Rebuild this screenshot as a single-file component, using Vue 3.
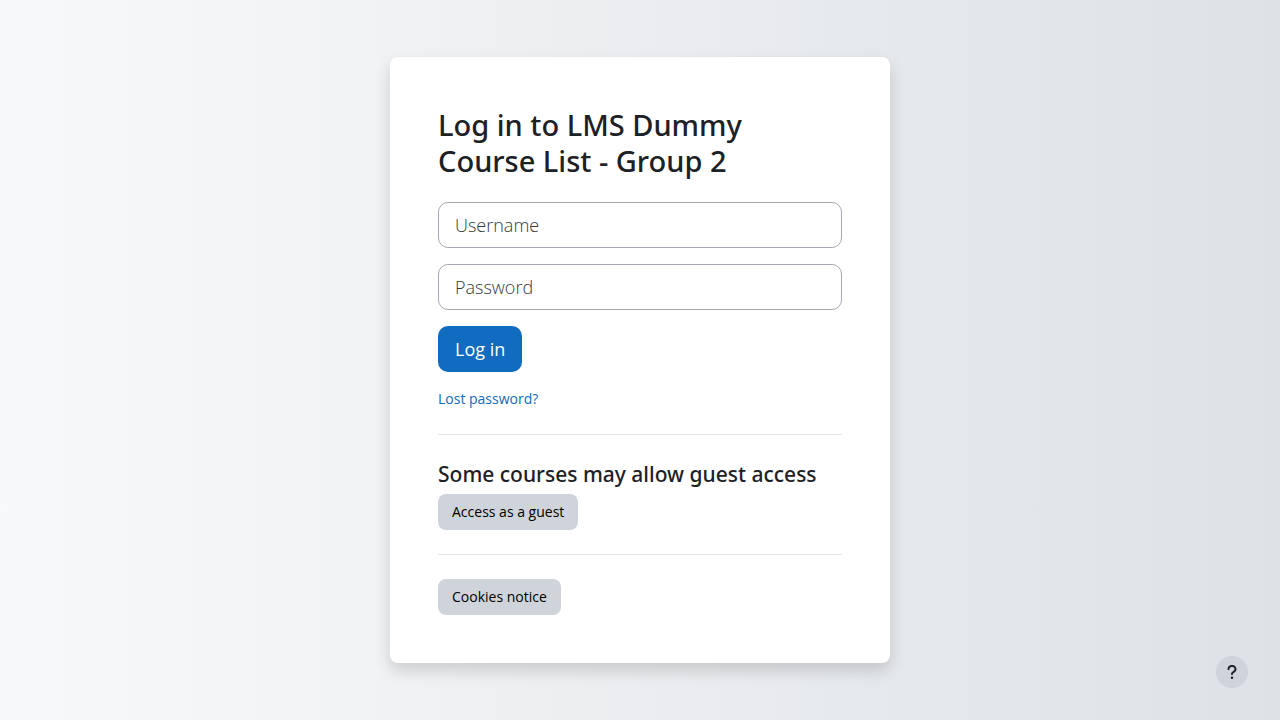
<script setup>
import { ref } from 'vue'

const username = ref('')
const password = ref('')
</script>

<template>
  <div class="page">
    <main class="card">
      <h1>Log in to LMS Dummy Course List - Group 2</h1>
      <form class="login" @submit.prevent>
        <input v-model="username" type="text" placeholder="Username" aria-label="Username" autocomplete="username" />
        <input v-model="password" type="password" placeholder="Password" aria-label="Password" autocomplete="current-password" />
        <button class="primary" type="submit">Log in</button>
      </form>
      <a class="lost" href="#">Lost password?</a>
      <hr />
      <h2>Some courses may allow guest access</h2>
      <button class="secondary" type="button">Access as a guest</button>
      <hr />
      <button class="secondary" type="button">Cookies notice</button>
    </main>
    <button class="help" type="button" aria-label="Help">
      <svg viewBox="0 0 320 512" aria-hidden="true">
        <path d="M80 160c0-35.300 28.700-64 64-64h32c35.300 0 64 28.700 64 64v3.600c0 21.800-11.100 42.100-29.400 53.800l-42.200 27.100c-25.200 16.200-40.400 44.100-40.400 74V320c0 17.700 14.300 32 32 32s32-14.300 32-32v-1.400c0-8.200 4.200-15.800 11-20.200l42.200-27.100c36.600-23.600 58.800-64.100 58.800-107.700V160c0-70.700-57.300-128-128-128h-32C73.300 32 16 89.300 16 160c0 17.700 14.300 32 32 32s32-14.300 32-32zm80 320a40 40 0 1 0 0-80 40 40 0 1 0 0 80z" />
      </svg>
    </button>
  </div>
</template>

<style>
body {
  margin: 0;
}
</style>

<style scoped>
.page {
  box-sizing: border-box;
  display: flex;
  align-items: center;
  justify-content: center;
  min-height: 100vh;
  padding: 24px;
  background: linear-gradient(to right, #f8f9fa, #dee2e6);
  color: #1d2125;
  font-family: "Segoe UI", "Open Sans", "Noto Sans", sans-serif;
  font-size: 15px;
  line-height: 22px;
}
.card {
  box-sizing: border-box;
  width: 100%;
  max-width: 500px;
  padding: 50px 48px 48px;
  border-radius: 8px;
  background: #fff;
  box-shadow: 0 8px 16px rgba(0, 0, 0, 0.15);
}
h1, h2 {
  margin: 0;
  font-family: "Segoe UI", "Noto Sans", sans-serif;
  font-weight: 500;
}
h1 {
  margin-bottom: 23px;
  font-size: 29px;
  line-height: 36px;
}
h2 {
  margin-bottom: 5px;
  font-size: 21px;
  line-height: 30px;
}
.login {
  display: flex;
  flex-direction: column;
  align-items: flex-start;
  gap: 16px;
}
input {
  box-sizing: border-box;
  width: 100%;
  height: 46px;
  padding: 8px 16px;
  border: 1px solid #a4a9b1;
  border-radius: 10px;
  background: #fff;
  color: #495057;
  font: inherit;
  font-size: 18px;
}
input::placeholder {
  color: #343a40;
  font-weight: 300;
  opacity: 1;
}
button {
  border: 0;
  font: inherit;
  cursor: pointer;
}
.primary {
  height: 46px;
  padding: 0 17px;
  border-radius: 10px;
  background: #0f6cbf;
  color: #fff;
  font-size: 18px;
}
.lost {
  display: block;
  width: fit-content;
  margin-top: 16px;
  color: #0f6cbf;
  font-size: 14px;
  text-decoration: none;
}
hr {
  margin: 24px 0;
  border: 0;
  border-top: 1px solid rgba(0, 0, 0, 0.1);
}
.secondary {
  height: 36px;
  padding: 0 14px;
  border-radius: 8px;
  background: #ced4da;
  color: #000;
  font-size: 14px;
}
.help {
  position: fixed;
  right: 32px;
  bottom: 32px;
  display: flex;
  align-items: center;
  justify-content: center;
  width: 32px;
  height: 32px;
  padding: 0;
  border-radius: 50%;
  background: #ced4da;
  color: #1d2125;
}
.help svg {
  width: 10px;
  height: 16px;
  fill: currentColor;
}
</style>
